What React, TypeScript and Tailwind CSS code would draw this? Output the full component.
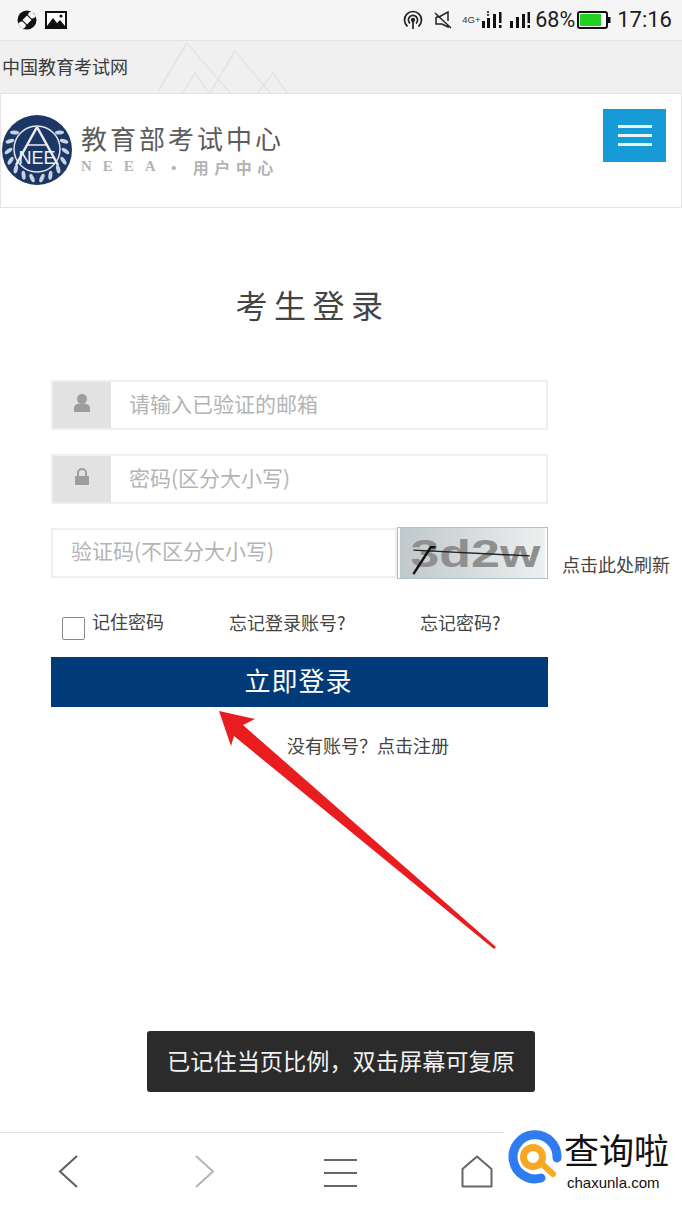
const CJK = `font-['Noto_Sans_CJK_SC','Noto_Sans',sans-serif]`;

const LEAF_ANGLES = [52, 72, 92, 112, 132, 152, 170, -52, -72, -92, -112, -132, -152, -170];

function StatusBar() {
  return (
    <div className="h-10 bg-[#f5f5f5] flex items-center justify-between pl-[17px] pr-[10px] text-[#1c1c1c]">
      <div className="flex items-center gap-[8px]">
        <svg width="20" height="20" viewBox="0 0 20 20">
          <circle cx="10" cy="10" r="9.5" fill="#111" />
          <path d="M10 5.5 L14.5 10 L10 14.5 L5.5 10Z" fill="#f5f5f5" />
          <path d="M11 5 C11 3 13 1 15 1.5 L19 6 C18 8 16 8.5 14.5 8.5Z" fill="#f5f5f5" />
          <path d="M9 15 C9 17 7 19 5 18.5 L1 14 C2 12 4 11.5 5.5 11.5Z" fill="#f5f5f5" />
        </svg>
        <svg width="22" height="20" viewBox="0 0 22 20">
          <rect x="1" y="2" width="20" height="16" fill="#fff" stroke="#111" strokeWidth="2" />
          <path d="M2 16 L8 8 L12 13 L15 10 L20 16 L20 17 L2 17Z" fill="#111" />
          <circle cx="16" cy="6" r="1.6" fill="#111" />
        </svg>
      </div>
      <div className="flex items-center">
        <svg width="20" height="20" viewBox="0 0 20 20" fill="none" stroke="#222" strokeWidth="1.7" className="mr-[10px]">
          <path d="M4.5 16.5 A8.5 8.5 0 1 1 15.5 16.5" />
          <path d="M7 13.5 A4.6 4.6 0 1 1 13 13.5" />
          <circle cx="10" cy="10" r="1.3" fill="#222" />
          <path d="M10 11 V19" />
        </svg>
        <svg width="20" height="20" viewBox="0 0 20 20" fill="none" stroke="#222" strokeWidth="1.5" className="mr-[9px]">
          <path d="M2 3 L18 18" />
          <path d="M3 7 H6 L15 2 V11 M15 15 V17 L9 14 H3 V7" />
        </svg>
        <span className="font-['Liberation_Sans',sans-serif] w-[19px] text-[9.5px] text-[#333] leading-none whitespace-nowrap">4G+</span>
        <svg width="22" height="20" viewBox="0 0 22 20" fill="#111" className="mr-[6px]">
          <circle cx="7" cy="2" r="1" />
          <circle cx="7" cy="5" r="1" />
          <rect x="1" y="11" width="3" height="7" />
          <rect x="6" y="8" width="3" height="10" />
          <rect x="12" y="4" width="3" height="14" />
          <rect x="18" y="2" width="2.5" height="11" />
          <rect x="18" y="15" width="2.5" height="3" />
        </svg>
        <svg width="22" height="20" viewBox="0 0 22 20" fill="#111" className="mr-[4px]">
          <rect x="1" y="11" width="3" height="7" />
          <rect x="7" y="7" width="3" height="11" />
          <rect x="13" y="4" width="3" height="14" />
          <rect x="18.5" y="2" width="2.5" height="11" />
          <rect x="18.5" y="15" width="2.5" height="3" />
        </svg>
        <span className="font-['Roboto',sans-serif] text-[21.5px] leading-none mr-[2px]">68%</span>
        <svg width="34" height="18" viewBox="0 0 34 18" className="mr-[6px]">
          <rect x="1" y="1" width="29" height="16" rx="2" fill="#fff" stroke="#111" strokeWidth="2" />
          <rect x="3" y="3" width="21" height="12" fill="#22d11f" />
          <rect x="31" y="6" width="2.5" height="6" fill="#111" />
        </svg>
        <span className="font-['Roboto',sans-serif] text-[22px] leading-none">17:16</span>
      </div>
    </div>
  );
}

function TitleBar() {
  return (
    <div className="relative h-[54px] bg-[#f0f0f0] border-y border-[#e4e4e4] flex items-center pl-[2px] pb-[3px] overflow-hidden">
      <span className="relative text-[18px] text-[#3a3a3a] leading-none">中国教育考试网</span>
      <svg width="140" height="54" viewBox="0 0 140 54" fill="none" stroke="#e0e6e6" strokeWidth="1.5" className="absolute left-[155px] top-0">
        <path d="M3 50 L32 2 L75 52" />
        <path d="M28 52 L40 32 L54 52" />
        <path d="M55 52 L80 10 L115 52" />
        <path d="M103 52 L118 32 L132 52" />
      </svg>
    </div>
  );
}

function NeeaLogo() {
  return (
    <svg width="70" height="70" viewBox="0 0 70 70" className="shrink-0">
      <circle cx="35" cy="35" r="35" fill="#1c3766" />
      {LEAF_ANGLES.map((a) => (
        <g key={a} transform={`rotate(${a} 35 35)`}>
          <ellipse cx="35" cy="6.5" rx="2" ry="4.5" fill="#c9d3e2" transform={`rotate(${a > 0 ? 35 : -35} 35 6.5)`} />
        </g>
      ))}
      <circle cx="35" cy="34" r="23" fill="#1c3766" stroke="#dfe5ee" strokeWidth="1.5" />
      <path d="M35 12 L14 50 M35 12 L56 50" stroke="#e8ecf3" strokeWidth="2.5" fill="none" />
      <path d="M26 30 H44" stroke="#e8ecf3" strokeWidth="1.5" />
      <text x="35" y="49" textAnchor="middle" fontFamily="Liberation Sans, sans-serif" fontSize="18" fill="#eef1f6">NEE</text>
    </svg>
  );
}

function Header() {
  return (
    <div className="h-[114px] bg-white border-x border-b border-[#e4e4e4] flex items-start justify-between pl-px pr-[15px] pt-[15px]">
      <div className="flex items-center gap-[9px] mt-[6px]">
        <NeeaLogo />
        <div className="flex flex-col gap-[7px] -mt-[2px]">
          <span className="text-[26px] leading-[28px] tracking-[3px] text-[#5c5c5c] whitespace-nowrap">教育部考试中心</span>
          <div className="flex items-center leading-none text-[#b4b4b4] font-bold whitespace-nowrap">
            <span className="font-['Liberation_Serif',serif] text-[15px] tracking-[11px]">NEEA</span>
            <span className="text-[16px] -ml-px w-[27px]">·</span>
            <span className="text-[16px] tracking-[5.5px]">用户中心</span>
          </div>
        </div>
      </div>
      <div className="w-[63px] h-[53px] bg-[#179bd7] flex flex-col items-center justify-center gap-[6px]">
        <div className="w-[34px] h-[3px] bg-[#e6f4fb]" />
        <div className="w-[34px] h-[3px] bg-[#e6f4fb]" />
        <div className="w-[34px] h-[3px] bg-[#e6f4fb]" />
      </div>
    </div>
  );
}

function UserIcon() {
  return (
    <svg width="18" height="20" viewBox="0 0 18 20" fill="#9d9d9d">
      <circle cx="9" cy="6" r="5" />
      <path d="M1 19 V15 C1 12 4 11 6 10.5 H12 C14 11 17 12 17 15 V19Z" />
    </svg>
  );
}

function LockIcon() {
  return (
    <svg width="16" height="18" viewBox="0 0 16 18" fill="#9d9d9d">
      <path d="M4 8 V5 A4 4 0 0 1 12 5 V8" fill="none" stroke="#9d9d9d" strokeWidth="2" />
      <rect x="1" y="8" width="14" height="9" rx="1" />
    </svg>
  );
}

function IconField({ icon, placeholder }: { icon: React.ReactNode; placeholder: string }) {
  return (
    <div className="h-[50px] w-[497px] flex border-2 border-[#eeeeee] bg-white">
      <div className="w-[58px] bg-[#e2e2e2] flex items-center justify-center pb-[5px]">{icon}</div>
      <div className="flex-1 flex items-center pl-[18px] text-[21px] text-[#b4b4b4] pb-[3px]">{placeholder}</div>
    </div>
  );
}

function Captcha() {
  return (
    <svg width="151" height="52" viewBox="0 0 151 52" className="shrink-0 border border-[#a9c4cc] -my-px">
      <defs>
        <linearGradient id="cap" x1="0" x2="1" y1="0" y2="0">
          <stop offset="0" stopColor="#bfc8cb" />
          <stop offset="1" stopColor="#eef0f0" />
        </linearGradient>
      </defs>
      <rect width="151" height="52" fill="url(#cap)" />
      <text x="11" y="41" fontFamily="Liberation Sans, sans-serif" fontWeight="700" fontSize="41" textLength="135" lengthAdjust="spacingAndGlyphs" fill="#8f8f8f">3d2w</text>
      <path d="M14 23 L135 29" stroke="#222" strokeWidth="1.5" fill="none" />
      <path d="M14 48 L32 20 L37 20" stroke="#111" strokeWidth="2.5" fill="none" />
    </svg>
  );
}

function RedArrow() {
  return (
    <svg width="682" height="1212" viewBox="0 0 682 1212" className="absolute left-0 top-0 pointer-events-none">
      <polygon points="219,711 255,719 243,725 496,947 494,949 234,736 231,746" fill="#e91d1f" />
    </svg>
  );
}

function BottomNav() {
  return (
    <div className="h-[80px] border-t border-[#dedede] bg-white grid grid-cols-5 items-center">
      <div className="flex justify-center pb-[2px]">
        <svg width="20" height="33" viewBox="0 0 20 33" fill="none" stroke="#5e5e5e" strokeWidth="2">
          <path d="M19 1 L2 16.5 L19 32" />
        </svg>
      </div>
      <div className="flex justify-center pb-[2px]">
        <svg width="20" height="33" viewBox="0 0 20 33" fill="none" stroke="#b4b4b4" strokeWidth="2">
          <path d="M1 1 L18 16.5 L1 32" />
        </svg>
      </div>
      <div className="flex justify-center">
        <div className="w-[33px] flex flex-col gap-[11px]">
          <div className="h-[2px] bg-[#666]" />
          <div className="h-[2px] bg-[#666]" />
          <div className="h-[2px] bg-[#666]" />
        </div>
      </div>
      <div className="flex justify-center pb-[2px]">
        <svg width="32" height="33" viewBox="0 0 32 33" fill="none" stroke="#666" strokeWidth="2">
          <path d="M1.5 31.5 V14 L16 1.5 L30.5 14 V31.5 Z" strokeLinejoin="round" />
        </svg>
      </div>
      <div />
    </div>
  );
}

function Watermark() {
  return (
    <div className="absolute left-[504px] top-[1128px] w-[178px] h-[65px] bg-white">
      <svg width="62" height="60" viewBox="0 0 62 60" className="absolute left-0 top-0">
        <path d="M37 50 A22 22 0 1 1 53 30" fill="none" stroke="#2f7cf0" strokeWidth="9" strokeLinecap="round" />
        <path d="M38 36 L49 46" stroke="#f7a823" strokeWidth="6" strokeLinecap="round" />
        <circle cx="29" cy="29" r="9.5" fill="#fff" stroke="#f7a823" strokeWidth="7" />
      </svg>
      <span className="absolute left-[60px] top-[1px] text-[35px] leading-[40px] text-[#111] whitespace-nowrap">查询啦</span>
      <span className="absolute left-[63px] top-[45px] font-['Liberation_Sans',sans-serif] text-[15px] leading-[20px] text-[#111] whitespace-nowrap">chaxunla.com</span>
    </div>
  );
}

export default function App() {
  return (
    <div className={`relative w-[682px] h-[1212px] overflow-hidden bg-white flex flex-col ${CJK}`}>
      <StatusBar />
      <TitleBar />
      <Header />

      <main className="flex-1 pl-[51px]">
        <h1 className="w-[523px] mt-[72px] text-center text-[32px] leading-[48px] tracking-[6.5px] font-normal text-[#444]">考生登录</h1>

        <div className="mt-[52px] flex flex-col gap-[24px]">
          <IconField icon={<UserIcon />} placeholder="请输入已验证的邮箱" />
          <IconField icon={<LockIcon />} placeholder="密码(区分大小写)" />
          <div className="flex items-center h-[50px]">
            <div className="w-[346px] h-[50px] border-2 border-[#eeeeee] flex items-center pl-[18px] pb-[5px] text-[21px] text-[#b4b4b4] whitespace-nowrap">验证码(不区分大小写)</div>
            <Captcha />
            <span className="ml-[14px] mt-[22px] text-[18px] leading-[26px] text-[#444] whitespace-nowrap">点击此处刷新</span>
          </div>
        </div>

        <div className="relative h-[79px] w-[497px] text-[18px] text-[#444]">
          <div className="absolute left-[11px] top-[39px] w-[23px] h-[23px] border border-[#8a8a8a] rounded-[2px] bg-white" />
          <span className="absolute left-[41px] top-[30px] leading-[26px]">记住密码</span>
          <span className="absolute left-[178px] top-[31px] leading-[26px] whitespace-nowrap">忘记登录账号?</span>
          <span className="absolute left-[369px] top-[31px] leading-[26px] whitespace-nowrap">忘记密码?</span>
        </div>

        <div className="w-[497px] h-[50px] bg-[#003a78] flex items-center justify-center pb-[5px] pr-[2px] text-[26px] text-white tracking-[1px]">立即登录</div>

        <p className="w-[497px] mt-[25px] pl-[236px] text-[18px] leading-[26px] text-[#444] whitespace-nowrap">没有账号？点击注册</p>
      </main>

      <RedArrow />

      <div className="absolute left-[147px] top-[1031px] w-[388px] h-[61px] bg-[#2b2b2b] rounded-[3px] flex items-center justify-center pb-[3px] text-[23.2px] text-[#f2f2f2] whitespace-nowrap">
        已记住当页比例，双击屏幕可复原
      </div>

      <BottomNav />
      <Watermark />
    </div>
  );
}
